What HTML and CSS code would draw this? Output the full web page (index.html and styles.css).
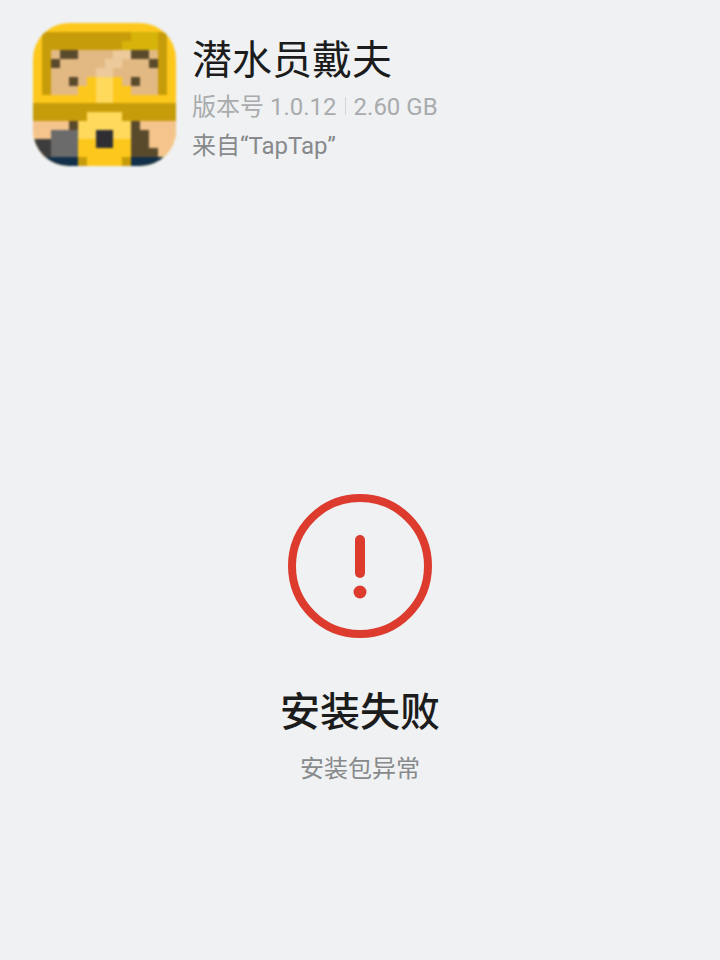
FILE: index.html
```html
<!DOCTYPE html>
<html lang="zh-CN">
<head>
    <meta charset="UTF-8">
    <meta name="viewport" content="width=device-width, initial-scale=1.0">
    <title>安装失败</title>
    <link rel="stylesheet" href="styles.css">
</head>
<body>

<header class="app-header">
    <svg class="app-icon" viewBox="0 0 16 16" shape-rendering="crispEdges">
        <rect width="16" height="16" fill="#fdc81c"/>
        <!-- helmet -->
        <rect x="1" y="1" width="10" height="1" fill="#c79c0a"/>
        <rect x="11" y="1" width="3" height="1" fill="#d6b40a"/>
        <rect x="14" y="1" width="1" height="1" fill="#c79c0a"/>
        <rect x="1" y="2" width="9" height="1" fill="#c79c0a"/>
        <rect x="10" y="2" width="4" height="1" fill="#d6b40a"/>
        <rect x="14" y="2" width="1" height="1" fill="#c79c0a"/>
        <rect x="1" y="3" width="1" height="6" fill="#c79c0a"/>
        <rect x="14" y="3" width="1" height="6" fill="#c79c0a"/>
        <rect x="1" y="8" width="14" height="1" fill="#fdc81c"/>
        <!-- face -->
        <rect x="2" y="3" width="12" height="5" fill="#e3b983"/>
        <rect x="9" y="3" width="2" height="1" fill="#ecca9c"/>
        <rect x="8" y="4" width="2" height="1" fill="#ecca9c"/>
        <rect x="7" y="5" width="2" height="1" fill="#ecca9c"/>
        <rect x="3" y="3" width="2" height="1" fill="#5a4a2c"/>
        <rect x="11" y="3" width="2" height="1" fill="#5a4a2c"/>
        <rect x="2" y="4" width="1" height="1" fill="#5a4a2c"/>
        <rect x="13" y="4" width="1" height="1" fill="#5a4a2c"/>
        <rect x="4" y="6" width="1" height="1" fill="#5a4a2c"/>
        <rect x="11" y="6" width="1" height="1" fill="#5a4a2c"/>
        <!-- nose guard -->
        <rect x="6" y="6" width="4" height="2" fill="#fdc81c"/>
        <rect x="5" y="7" width="6" height="1" fill="#fdc81c"/>
        <rect x="7" y="6" width="2" height="3" fill="#ffd95c"/>
        <!-- band -->
        <rect x="0" y="9" width="16" height="2" fill="#c79c0a"/>
        <rect x="6" y="10" width="4" height="1" fill="#ffd95c"/>
        <!-- body -->
        <rect x="0" y="11" width="16" height="4" fill="#f4c48c"/>
        <rect x="4" y="11" width="1" height="1" fill="#5a4a2c"/>
        <rect x="11" y="11" width="1" height="1" fill="#5a4a2c"/>
        <rect x="2" y="12" width="3" height="3" fill="#6b6b6b"/>
        <rect x="0" y="13" width="2" height="2" fill="#3d3d3d"/>
        <rect x="11" y="12" width="2" height="2" fill="#5a4a2c"/>
        <rect x="11" y="14" width="3" height="1" fill="#5a4a2c"/>
        <rect x="0" y="15" width="16" height="1" fill="#12304a"/>
        <!-- lock -->
        <rect x="5" y="11" width="6" height="2" fill="#ffd95c"/>
        <rect x="5" y="13" width="6" height="2" fill="#fdc81c"/>
        <rect x="5" y="15" width="6" height="1" fill="#c79c0a"/>
        <rect x="6" y="15" width="4" height="1" fill="#fdc81c"/>
        <rect x="7" y="12" width="2" height="2" fill="#2e2e33"/>
    </svg>
    <div class="app-info">
        <div class="app-name">潜水员戴夫</div>
        <div class="app-meta">版本号 1.0.12<span class="sep"></span>2.60 GB</div>
        <div class="app-source">来自“TapTap”</div>
    </div>
</header>

<main class="result">
    <svg class="result-icon" viewBox="0 0 144 144">
        <circle cx="72" cy="72" r="68" fill="none" stroke="#dc3b2e" stroke-width="8"/>
        <line x1="72" y1="46" x2="72" y2="79" stroke="#dc3b2e" stroke-width="10" stroke-linecap="round"/>
        <circle cx="72" cy="98" r="6.5" fill="#dc3b2e"/>
    </svg>
    <h1 class="result-title">安装失败</h1>
    <p class="result-desc">安装包异常</p>
</main>

</body>
</html>
```

FILE: styles.css
```css
body {
    margin: 0;
    height: 960px;
    overflow: hidden;
    background-color: #eff1f3;
    font-family: Roboto, "Noto Sans CJK SC", sans-serif;
}
.app-header {
    display: flex;
    gap: 16px;
    padding: 23px 33px 0;
    height: 143px;
}
.app-icon {
    width: 143px;
    height: 143px;
    flex: none;
    border-radius: 36px;
    filter: blur(0.8px);
}
.app-info {
    display: flex;
    flex-direction: column;
}
.app-name {
    font-size: 40px;
    line-height: 48px;
    margin-top: 14px;
    color: #1c1c1c;
}
.app-meta {
    font-size: 24px;
    line-height: 30px;
    margin-top: 7px;
    color: #a9abad;
}
.sep {
    display: inline-block;
    width: 1px;
    height: 18px;
    margin: 0 8px;
    background-color: #d5d6d8;
}
.app-source {
    font-size: 24px;
    line-height: 30px;
    margin-top: 9px;
    color: #87898b;
}
.result {
    display: flex;
    flex-direction: column;
    align-items: center;
    margin-top: 328px;
}
.result-icon {
    width: 144px;
    height: 144px;
}
.result-title {
    margin: 49px 0 0;
    font-size: 40px;
    line-height: 52px;
    font-weight: 500;
    color: #1c1c1c;
}
.result-desc {
    margin: 14px 0 0;
    font-size: 24px;
    line-height: 32px;
    color: #87898b;
}
```
